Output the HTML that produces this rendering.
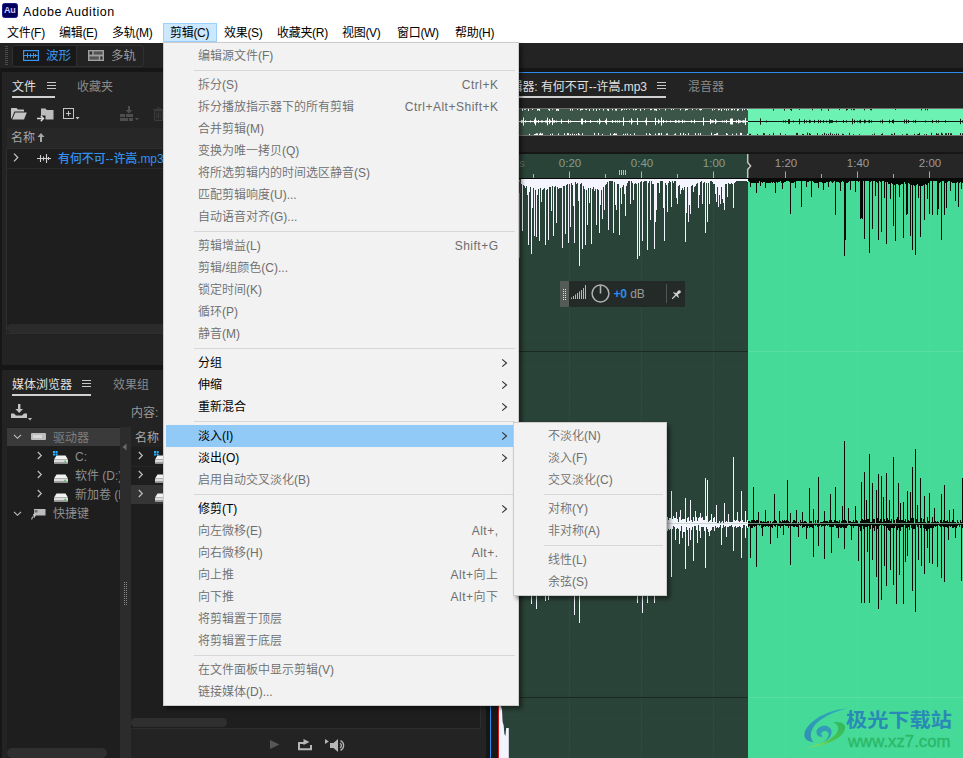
<!DOCTYPE html><html lang="zh"><head><meta charset="utf-8"><title>Adobe Audition</title><style>
*{box-sizing:border-box;margin:0;padding:0}
html,body{width:963px;height:758px;overflow:hidden;background:#1e1e1e}
body{position:relative;font-family:"Liberation Sans","Noto Sans CJK SC",sans-serif;font-size:12px;color:#000;line-height:1}
.a{position:absolute}
.t{position:absolute;white-space:nowrap;line-height:16px;height:16px}
#title{left:0;top:0;width:963px;height:22px;background:#fff}
#menubar{left:0;top:22px;width:963px;height:21px;background:#fff}

.mb{position:absolute;top:25px;letter-spacing:-0.3px;height:16px;line-height:16px;font-size:12px;white-space:nowrap;color:#000}
#toolbar{left:0;top:43px;width:963px;height:25px;background:#232323}
.gap{background:#161616}
.panel{background:#232323}
.dk{background:#1e1e1e}
.tab{position:absolute;margin-top:1px;font-size:12px;line-height:16px;white-space:nowrap}
.menu{position:absolute;background:#f2f2f2;border:1px solid #ccc;box-shadow:3px 3px 4px rgba(0,0,0,.45)}
.mi{position:absolute;left:0;height:22px;line-height:22px;font-size:12px;white-space:nowrap;color:#6d6d6d;font-weight:350}
.mi.en{font-weight:400}
.mi .l{position:absolute;left:34px;top:0}
.mi .r{position:absolute;right:20px;top:0;letter-spacing:.5px;margin-right:-.5px}
.mi.en{color:#000}
.mi.hl{background:#91c9f7}
.sep{position:absolute;height:1px;background:#d7d7d7}
.arr{position:absolute;right:8px;top:6px;width:7px;height:10px}
</style></head><body>
<div id="title" class="a"></div>
<div class="a" style="left:2px;top:3px;width:16px;height:15px;background:#00005b;border-radius:2.5px;border:1px solid #1c1c8a"></div>
<div class="t" style="left:4px;top:3px;font-size:9px;font-weight:bold;color:#c9c9ff;line-height:15px;height:15px;letter-spacing:-0.3px">Au</div>
<div class="t" style="left:23px;top:4px;font-size:12.5px;line-height:16px;letter-spacing:0.55px">Adobe Audition</div>
<div id="menubar" class="a"></div>
<div class="a" style="left:163px;top:23px;width:54px;height:19px;background:#cce8ff;border:1px solid #99d1ff"></div>
<div class="mb" style="left:7px">文件(F)</div>
<div class="mb" style="left:59px">编辑(E)</div>
<div class="mb" style="left:112px">多轨(M)</div>
<div class="mb" style="left:170px">剪辑(C)</div>
<div class="mb" style="left:224px">效果(S)</div>
<div class="mb" style="left:277px">收藏夹(R)</div>
<div class="mb" style="left:342px">视图(V)</div>
<div class="mb" style="left:397px">窗口(W)</div>
<div class="mb" style="left:455px">帮助(H)</div>
<div id="toolbar" class="a"></div>
<div class="a gap" style="left:0;top:68px;width:963px;height:4px"></div>
<div class="a" style="left:5px;top:46px;width:3px;height:19px;background:repeating-linear-gradient(#4a4a4a 0 1px,transparent 1px 2px)"></div>
<div class="a" style="left:12px;top:45px;width:132px;height:22px;border:1px solid #303030;border-radius:3px;background:#232323"></div>
<div class="a" style="left:13px;top:46px;width:63px;height:20px;background:#191919;border-radius:2px 0 0 2px"></div>
<div class="a" style="left:76px;top:46px;width:1px;height:20px;background:#303030"></div>
<svg class="a" style="left:23px;top:50px" width="16" height="11" viewBox="0 0 16 11"><rect x=".6" y=".6" width="14.800" height="9.800" fill="none" stroke="#3b95ea" stroke-width="1.2"/><path d="M1 5.500H15M4.500 3v5M7.500 3.500v4M10.500 3v5M12.500 4v3" stroke="#3b95ea" stroke-width="1" fill="none"/></svg>
<div class="t" style="left:46px;top:48px;color:#3b95ea;font-size:12.5px">波形</div>
<svg class="a" style="left:88px;top:50px" width="16" height="11" viewBox="0 0 17 12" preserveAspectRatio="none"><rect x="0" y="0" width="17" height="12" fill="#a0a0a0"/><rect x="1.5" y="1.5" width="3" height="3.5" fill="#333"/><rect x="6" y="1.5" width="9.5" height="3.5" fill="#555"/><rect x="1.5" y="7" width="10" height="3.5" fill="#555"/><rect x="13" y="7" width="2.5" height="3.5" fill="#333"/></svg>
<div class="t" style="left:111px;top:48px;color:#9a9a9a;font-size:12.5px">多轨</div>
<div class="a panel" style="left:2px;top:72px;width:484px;height:293px"></div>
<div class="a gap" style="left:0;top:72px;width:2px;height:686px"></div>
<div class="tab" style="left:12px;top:78px;color:#e0e0e0">文件</div>
<div class="a" style="left:12px;top:96px;width:43px;height:2px;background:#d0d0d0"></div>
<svg class="a" style="left:47px;top:82px" width="9" height="8"><path d="M0 .5H9M0 3.5H9M0 6.5H9" stroke="#c8c8c8" stroke-width="1"/></svg>
<div class="tab" style="left:77px;top:78px;color:#8a8a8a">收藏夹</div>
<svg class="a" style="left:11px;top:107px" width="16" height="13" viewBox="0 0 16 13"><path d="M0 1.500Q0 1 .5 1H5.500L7 2.500H12.500Q13 2.500 13 3V4.500H3.500L0.600 11.500H0z" fill="#c4c4c4"/><path d="M4.200 5.500H15.800L13 12.500H1.200z" fill="#c4c4c4"/></svg>
<svg class="a" style="left:37px;top:107px" width="17" height="15" viewBox="0 0 17 15"><path d="M4 1.500h4.500L9.800 3H16.500v9.500H8.500V8.500H4z" fill="#bcbcbc"/><path d="M0 11.500h6M3.800 8.800L6.500 11.500 3.800 14.200" stroke="#dcdcdc" stroke-width="1.400" fill="none"/></svg>
<svg class="a" style="left:63px;top:108px" width="18" height="13" viewBox="0 0 18 13"><rect x=".5" y=".5" width="10" height="10" fill="none" stroke="#c4c4c4"/><path d="M3 5.5h5M5.5 3v5" stroke="#c4c4c4"/><path d="M12.5 9h4l-2 2.5z" fill="#c4c4c4"/></svg>
<svg class="a" style="left:120px;top:106px" width="20" height="16" viewBox="0 0 20 16"><path d="M8 0h2v4h2.5L9 7.5 5.5 4H8z" fill="#4e4e4e"/><path d="M0 8h5v3H0zM6 8h7v3H6zM0 12h8v3H0zM9 12h4v3H9z" fill="#4e4e4e"/><path d="M15 12h4l-2 2.5z" fill="#4e4e4e"/></svg>
<svg class="a" style="left:153px;top:107px" width="11" height="14" viewBox="0 0 11 14"><path d="M0 2.500h11M3.500 1h4" stroke="#3c3c3c" stroke-width="1.200"/><rect x="1.500" y="3.600" width="8" height="9.800" rx="1" fill="none" stroke="#3c3c3c" stroke-width="1.200"/><path d="M3.800 5.500v6M5.500 5.500v6M7.200 5.500v6" stroke="#3c3c3c"/></svg>
<div class="a" style="left:7px;top:128px;width:479px;height:20px;background:#272727"></div>
<div class="tab" style="left:11px;top:129px;color:#a8a8a8">名称</div>
<svg class="a" style="left:37px;top:133px" width="8" height="9" viewBox="0 0 8 9"><path d="M4 0L7.5 4H5V9H3V4H.5z" fill="#a8a8a8"/></svg>
<div class="a dk" style="left:6px;top:148px;width:480px;height:186px;border:1px solid #2e2e2e"></div>
<div class="a" style="left:7px;top:168px;width:478px;height:1px;background:#2a2a2a"></div>
<svg class="a" style="left:13px;top:153px" width="6" height="9" viewBox="0 0 6 9"><path d="M1 .7L4.8 4.5 1 8.3" stroke="#c8c8c8" stroke-width="1.2" fill="none"/></svg>
<svg class="a" style="left:37px;top:154px" width="14" height="9" viewBox="0 0 14 9"><path d="M0 4.5H14M3.5 1v7M6.5 2.5v4M9.5 0v9M11.5 3v3" stroke="#d0d0d0" stroke-width="1.1" fill="none"/></svg>
<div class="tab" style="left:58px;top:150px;color:#3390ec;font-weight:500;letter-spacing:-0.1px">有何不可--许嵩.mp3</div>
<div class="a" style="left:7px;top:324px;width:478px;height:9px;background:#2b2b2b;border-radius:5px 0 0 5px"></div>
<div class="a gap" style="left:0;top:365px;width:490px;height:5px"></div>
<div class="a panel" style="left:2px;top:370px;width:484px;height:388px"></div>
<div class="tab" style="left:12px;top:376px;color:#e0e0e0">媒体浏览器</div>
<div class="a" style="left:12px;top:394px;width:79px;height:2px;background:#d0d0d0"></div>
<svg class="a" style="left:82px;top:380px" width="9" height="8"><path d="M0 .5H9M0 3.5H9M0 6.5H9" stroke="#c8c8c8" stroke-width="1"/></svg>
<div class="tab" style="left:113px;top:376px;color:#8a8a8a">效果组</div>
<svg class="a" style="left:11px;top:404px" width="22" height="17" viewBox="0 0 22 17"><path d="M7 0h2.4v5H12L8.2 9 4.4 5H7z" fill="#c4c4c4"/><path d="M0 9.5h3l2 2h6l2-2h3V14H0z" fill="#c4c4c4"/><path d="M17 14h4l-2 2.5z" fill="#c4c4c4"/></svg>
<div class="tab" style="left:131px;top:404px;color:#9a9a9a">内容:</div>
<div class="a dk" style="left:7px;top:427px;width:113px;height:331px"></div>
<div class="a" style="left:7px;top:428px;width:113px;height:18px;background:#3a3a3a"></div>
<div class="a" style="left:120px;top:427px;width:11px;height:331px;background:#2c2c2c"></div>
<svg class="a" style="left:122px;top:443px" width="5" height="8"><path d="M4.5 .5v7L.5 4z" fill="#6a6a6a"/></svg>
<svg class="a" style="left:13px;top:434px" width="9" height="6" viewBox="0 0 9 6"><path d="M1 .8L4.500 4.300 8 .8" stroke="#c0c0c0" stroke-width="1.150" fill="none"/></svg>
<div class="a" style="left:31px;top:433px;width:15px;height:7px;background:#bdbdbd;border-radius:1px"></div><div class="a" style="left:33px;top:435px;width:9px;height:3px;background:#d8d8d8"></div>
<div class="tab" style="left:53px;top:429px;color:#7e7e7e">驱动器</div>
<svg class="a" style="left:37px;top:451px" width="6" height="9" viewBox="0 0 6 9"><path d="M.8 1L4.300 4.500 .8 8" stroke="#c0c0c0" stroke-width="1.150" fill="none"/></svg>
<svg class="a" style="left:53px;top:451px" width="16" height="13" viewBox="0 0 16 13"><path d="M3.500 4.500h9L15 8.500H1z" fill="#f2f2f2"/><rect x="1" y="8.500" width="14" height="4.300" rx=".8" fill="#dcdcdc"/><rect x="1" y="11.300" width="14" height="1.500" rx=".6" fill="#8a8a8a"/><rect x="11.300" y="9.800" width="1.600" height="1.400" fill="#2ecc40"/><path d="M0 0h2v2H0zM2.6 0h2v2h-2zM0 2.6h2v2H0zM2.6 2.6h2v2h-2z" fill="#22b4ff"/></svg>
<div class="tab" style="left:75px;top:448px;color:#8e8e8e">C:</div>
<svg class="a" style="left:37px;top:470px" width="6" height="9" viewBox="0 0 6 9"><path d="M.8 1L4.300 4.500 .8 8" stroke="#c0c0c0" stroke-width="1.150" fill="none"/></svg>
<svg class="a" style="left:53px;top:470px" width="16" height="13" viewBox="0 0 16 13"><path d="M3.500 4.500h9L15 8.500H1z" fill="#f2f2f2"/><rect x="1" y="8.500" width="14" height="4.300" rx=".8" fill="#dcdcdc"/><rect x="1" y="11.300" width="14" height="1.500" rx=".6" fill="#8a8a8a"/><rect x="11.300" y="9.800" width="1.600" height="1.400" fill="#2ecc40"/></svg>
<div class="tab" style="left:75px;top:467px;color:#8e8e8e">软件 (D:)</div>
<svg class="a" style="left:37px;top:489px" width="6" height="9" viewBox="0 0 6 9"><path d="M.8 1L4.300 4.500 .8 8" stroke="#c0c0c0" stroke-width="1.150" fill="none"/></svg>
<svg class="a" style="left:53px;top:489px" width="16" height="13" viewBox="0 0 16 13"><path d="M3.500 4.500h9L15 8.500H1z" fill="#f2f2f2"/><rect x="1" y="8.500" width="14" height="4.300" rx=".8" fill="#dcdcdc"/><rect x="1" y="11.300" width="14" height="1.500" rx=".6" fill="#8a8a8a"/><rect x="11.300" y="9.800" width="1.600" height="1.400" fill="#2ecc40"/></svg>
<div class="tab" style="left:75px;top:486px;color:#8e8e8e">新加卷 (E:)</div>
<div class="a" style="left:120px;top:427px;width:11px;height:331px;background:#2c2c2c"></div>
<svg class="a" style="left:122px;top:443px" width="5" height="8"><path d="M4.5 .5v7L.5 4z" fill="#6a6a6a"/></svg>
<div class="a" style="left:124px;top:582px;width:3px;height:24px;background:repeating-linear-gradient(90deg,#8a8a8a 0 1px,transparent 1px 2px)"></div><div class="a" style="left:124px;top:583px;width:3px;height:24px;background:repeating-linear-gradient(#2c2c2c 0 1px,transparent 1px 2px)"></div>
<svg class="a" style="left:13px;top:511px" width="9" height="6" viewBox="0 0 9 6"><path d="M1 .8L4.500 4.300 8 .8" stroke="#c0c0c0" stroke-width="1.150" fill="none"/></svg>
<svg class="a" style="left:31px;top:508px" width="15" height="12" viewBox="0 0 15 12"><path d="M3 1h11.500v6.500H3z" fill="#bcbcbc"/><path d="M3.500 2h3v2.500h-3z" fill="#2a2a2a" opacity=".5"/><path d="M.8 11.500C1 9 2 7.800 4 7.500M2 6.500L4.200 7.500 3 9.800" stroke="#dcdcdc" stroke-width="1" fill="none"/></svg>
<div class="tab" style="left:53px;top:505px;color:#8e8e8e">快捷键</div>
<div class="a" style="left:7px;top:748px;width:100px;height:10px;background:#2f2f2f;border-radius:5px"></div>
<div class="a dk" style="left:131px;top:427px;width:350px;height:302px;border-right:1px solid #2d2d2d;border-bottom:1px solid #2d2d2d"></div>
<div class="a panel" style="left:131px;top:427px;width:349px;height:20px"></div>
<div class="tab" style="left:135px;top:429px;color:#a8a8a8">名称</div>
<div class="a" style="left:131px;top:466px;width:349px;height:1px;background:#262626"></div>
<div class="a" style="left:131px;top:485px;width:349px;height:19px;background:#353535"></div>
<svg class="a" style="left:138px;top:451px" width="6" height="9" viewBox="0 0 6 9"><path d="M.8 1L4.300 4.500 .8 8" stroke="#c0c0c0" stroke-width="1.150" fill="none"/></svg>
<svg class="a" style="left:154px;top:451px" width="16" height="13" viewBox="0 0 16 13"><path d="M3.500 4.500h9L15 8.500H1z" fill="#f2f2f2"/><rect x="1" y="8.500" width="14" height="4.300" rx=".8" fill="#dcdcdc"/><rect x="1" y="11.300" width="14" height="1.500" rx=".6" fill="#8a8a8a"/><rect x="11.300" y="9.800" width="1.600" height="1.400" fill="#2ecc40"/><path d="M0 0h2v2H0zM2.6 0h2v2h-2zM0 2.6h2v2H0zM2.6 2.6h2v2h-2z" fill="#22b4ff"/></svg>
<svg class="a" style="left:138px;top:470px" width="6" height="9" viewBox="0 0 6 9"><path d="M.8 1L4.300 4.500 .8 8" stroke="#c0c0c0" stroke-width="1.150" fill="none"/></svg>
<svg class="a" style="left:154px;top:470px" width="16" height="13" viewBox="0 0 16 13"><path d="M3.500 4.500h9L15 8.500H1z" fill="#f2f2f2"/><rect x="1" y="8.500" width="14" height="4.300" rx=".8" fill="#dcdcdc"/><rect x="1" y="11.300" width="14" height="1.500" rx=".6" fill="#8a8a8a"/><rect x="11.300" y="9.800" width="1.600" height="1.400" fill="#2ecc40"/></svg>
<svg class="a" style="left:138px;top:489px" width="6" height="9" viewBox="0 0 6 9"><path d="M.8 1L4.300 4.500 .8 8" stroke="#c0c0c0" stroke-width="1.150" fill="none"/></svg>
<svg class="a" style="left:154px;top:489px" width="16" height="13" viewBox="0 0 16 13"><path d="M3.500 4.500h9L15 8.500H1z" fill="#f2f2f2"/><rect x="1" y="8.500" width="14" height="4.300" rx=".8" fill="#dcdcdc"/><rect x="1" y="11.300" width="14" height="1.500" rx=".6" fill="#8a8a8a"/><rect x="11.300" y="9.800" width="1.600" height="1.400" fill="#2ecc40"/></svg>
<div class="a" style="left:131px;top:718px;width:96px;height:9px;background:#2f2f2f;border-radius:5px"></div>
<svg class="a" style="left:270px;top:740px" width="10" height="9"><path d="M0 0L9.500 4.500 0 9z" fill="#575757"/></svg>
<svg class="a" style="left:298px;top:738px" width="15" height="13" viewBox="0 0 15 13"><path d="M4.500 5H1V11.200H13V7" stroke="#b6b6b6" stroke-width="2" fill="none"/><path d="M3 4h3.500v2H3z" fill="#b6b6b6"/><path d="M5.500 1L11.500 4 5.500 7z" fill="#b6b6b6"/></svg>
<svg class="a" style="left:325px;top:738px" width="22" height="15" viewBox="0 0 22 15"><path d="M0 1L3.800 3.500 0 6z" fill="#b6b6b6"/><path d="M5 5h3.500L13 1v13L8.500 10H5z" fill="#b6b6b6"/><path d="M15 5.200a2.600 2.600 0 010 4.600M15.500 2.600a5.400 5.400 0 010 9.800" stroke="#b6b6b6" stroke-width="1.300" fill="none"/></svg>
<div class="a gap" style="left:486px;top:72px;width:4px;height:686px"></div>
<div class="a panel" style="left:490px;top:72px;width:473px;height:686px"></div>
<div class="a" style="left:490px;top:72px;width:473px;height:1px;background:#2d8ceb"></div>
<div class="a" style="left:490px;top:72px;width:1px;height:686px;background:#2d8ceb"></div>
<div class="a" style="left:491px;top:107px;width:7px;height:651px;background:#191919"></div>
<div class="a" style="left:498px;top:154px;width:1px;height:604px;background:#d01818"></div>
<div class="tab" style="right:316px;top:78px;color:#e0e0e0;letter-spacing:-0.05px">编辑器: 有何不可--许嵩.mp3</div>
<div class="a" style="left:500px;top:96px;width:166px;height:2px;background:#d0d0d0"></div>
<svg class="a" style="left:657px;top:82px" width="9" height="8"><path d="M0 .5H9M0 3.5H9M0 6.5H9" stroke="#c8c8c8" stroke-width="1"/></svg>
<div class="tab" style="left:688px;top:78px;color:#8a8a8a">混音器</div>
<div class="a" style="left:499px;top:108px;width:464px;height:28px;background:#707070"></div>
<div class="a" style="left:499px;top:109px;width:249px;height:26px;background:#3b5549"></div>
<div class="a" style="left:748px;top:109px;width:215px;height:26px;background:#6cf3b3"></div>
<svg class="a" style="left:0;top:0" width="963" height="140" viewBox="0 0 963 140"><path d="M521.5 119.9V123.1M522.5 120.3V122.7M522.5 109V110.8M523.5 117.4V125.6M524.5 109V109.7M525.5 120.4V122.6M525.5 109V109.7M528.5 109V111.0M529.5 135V133.9M530.5 120.5V122.5M532.5 109V110.0M534.5 119.5V123.5M534.5 135V134.2M535.5 117.6V125.4M535.5 135V133.9M536.5 120.5V122.5M536.5 135V133.4M537.5 109V110.7M537.5 135V133.3M538.5 120.1V122.9M538.5 109V110.1M539.5 109V110.9M539.5 135V133.7M540.5 135V132.7M541.5 120.4V122.6M541.5 135V133.8M542.5 120.5V122.5M542.5 135V133.3M545.5 120.5V122.5M546.5 120.4V122.6M547.5 117.7V125.3M548.5 109V109.8M549.5 119.2V123.8M549.5 109V110.8M550.5 120.5V122.5M550.5 135V133.9M552.5 117.9V125.1M552.5 109V109.7M552.5 135V133.6M553.5 120.5V122.5M554.5 120.2V122.8M556.5 120.5V122.5M556.5 109V110.9M557.5 109V110.5M558.5 109V111.0M558.5 135V133.4M561.5 119.3V123.7M564.5 135V133.3M567.5 135V133.1M568.5 119.6V123.4M568.5 135V133.2M570.5 120.5V122.5M570.5 109V110.6M570.5 135V134.0M572.5 109V110.6M572.5 135V133.6M574.5 135V134.1M576.5 135V134.0M577.5 109V110.0M578.5 135V133.0M579.5 135V134.2M580.5 109V110.6M581.5 118.7V124.3M581.5 109V109.9M582.5 118.5V124.5M582.5 109V109.9M582.5 135V133.3M585.5 120.0V123.0M585.5 109V109.7M586.5 109V110.1M589.5 109V110.9M590.5 120.1V122.9M593.5 109V110.6M594.5 135V132.9M596.5 109V110.9M597.5 120.5V122.5M598.5 135V133.0M599.5 118.7V124.3M599.5 109V110.1M600.5 120.5V122.5M602.5 135V133.9M603.5 109V110.6M605.5 120.2V122.8M606.5 118.4V124.6M607.5 109V110.4M608.5 109V111.0M610.5 135V133.4M612.5 120.0V123.0M612.5 109V110.3M613.5 135V134.0M614.5 135V133.1M615.5 120.4V122.6M615.5 109V110.6M615.5 135V133.7M616.5 109V110.7M616.5 135V133.5M617.5 120.4V122.6M619.5 120.4V122.6M621.5 109V110.7M622.5 109V110.1M623.5 117.3V125.7M623.5 135V133.9M624.5 109V109.8M625.5 135V133.7M626.5 109V110.0M627.5 135V133.5M629.5 120.5V122.5M629.5 109V109.7M630.5 135V134.0M631.5 118.4V124.6M632.5 120.5V122.5M633.5 109V110.3M634.5 135V133.2M635.5 109V110.3M636.5 109V109.9M637.5 118.1V124.9M640.5 109V110.9M644.5 109V110.1M645.5 120.3V122.7M646.5 117.7V125.3M646.5 135V133.2M649.5 135V133.3M650.5 109V110.2M650.5 135V134.0M651.5 109V110.0M654.5 109V110.5M655.5 117.8V125.2M655.5 109V110.3M655.5 135V133.5M656.5 109V110.9M658.5 119.4V123.6M658.5 135V133.2M659.5 120.5V122.5M659.5 109V109.8M659.5 135V133.1M661.5 117.4V125.6M661.5 135V132.9M663.5 119.9V123.1M665.5 109V110.5M666.5 120.5V122.5M666.5 135V133.6M667.5 135V133.4M670.5 120.5V122.5M671.5 109V110.1M673.5 109V110.0M674.5 135V134.2M675.5 120.1V122.9M675.5 135V133.4M676.5 120.5V122.5M678.5 120.3V122.7M679.5 120.5V122.5M680.5 109V110.3M680.5 135V133.0M682.5 119.8V123.2M683.5 135V132.9M684.5 120.5V122.5M685.5 109V110.7M685.5 135V134.0M686.5 109V110.1M687.5 109V109.9M688.5 135V133.2M691.5 120.3V122.7M692.5 109V110.2M694.5 119.7V123.3M695.5 135V133.1M696.5 109V109.7M698.5 135V133.4M699.5 109V109.8M700.5 109V110.5M700.5 135V133.1M701.5 109V110.0M703.5 117.5V125.5M710.5 119.0V124.0M711.5 120.4V122.6M711.5 135V132.7M712.5 120.3V122.7M712.5 109V110.5M713.5 120.5V122.5M714.5 109V109.8M714.5 135V134.0M715.5 119.1V123.9M715.5 135V134.0M716.5 120.5V122.5M716.5 135V133.4M717.5 135V132.9M718.5 109V110.4M719.5 109V109.8M721.5 109V111.0M722.5 120.5V122.5M724.5 120.5V122.5M724.5 109V110.0M726.5 119.8V123.2M726.5 109V110.7M726.5 135V133.0M727.5 135V133.9M728.5 109V110.3M730.5 118.7V124.3M731.5 118.5V124.5M731.5 109V110.4M732.5 118.5V124.5M732.5 109V110.1M732.5 135V133.8M734.5 109V110.2M736.5 120.2V122.8M736.5 135V133.4M737.5 109V111.0M738.5 119.5V123.5M738.5 109V110.2M739.5 120.3V122.7M740.5 120.4V122.6M740.5 135V132.8M741.5 135V133.0M742.5 120.5V122.5M742.5 109V110.6M743.5 120.2V122.8M744.5 120.4V122.6M744.5 109V109.9M745.5 117.9V125.1M747.5 109V110.2M747.5 135V133.7" stroke="#fff" stroke-width="1" fill="none"/><path d="M519 121.5H748" stroke="#fff" stroke-width="1.2"/><path d="M749.5 135V133.8M750.5 135V133.7M757.5 135V133.9M760.5 118.3V124.7M763.5 135V133.0M764.5 135V133.4M766.5 120.5V122.5M769.5 135V134.0M773.5 109V110.6M773.5 135V132.8M780.5 135V133.1M783.5 120.5V122.5M784.5 109V110.6M785.5 120.4V122.6M785.5 135V134.2M788.5 119.3V123.7M789.5 119.2V123.8M790.5 109V110.0M791.5 109V110.9M793.5 120.5V122.5M796.5 135V133.0M797.5 135V132.9M799.5 118.8V124.2M799.5 109V109.8M802.5 135V133.9M803.5 135V134.0M804.5 119.6V123.4M806.5 120.4V122.6M807.5 135V132.7M809.5 119.8V123.2M809.5 135V133.0M810.5 120.4V122.6M810.5 135V133.9M812.5 109V110.3M814.5 119.9V123.1M817.5 135V133.1M818.5 119.8V123.2M820.5 120.1V122.9M821.5 109V110.5M822.5 135V134.1M823.5 120.1V122.9M824.5 135V132.8M826.5 120.5V122.5M826.5 135V133.8M828.5 109V110.8M828.5 135V133.9M829.5 119.5V123.5M830.5 120.2V122.8M830.5 135V132.7M831.5 120.1V122.9M832.5 120.2V122.8M832.5 135V133.9M834.5 135V134.2M836.5 120.4V122.6M836.5 135V133.6M838.5 135V133.7M839.5 109V110.1M842.5 135V133.7M843.5 120.0V123.0M843.5 135V134.0M846.5 120.3V122.7M846.5 109V110.6M847.5 109V109.9M849.5 135V132.8M851.5 109V110.1M852.5 118.7V124.3M853.5 109V110.2M853.5 135V134.2M854.5 119.8V123.2M854.5 109V110.1M857.5 120.5V122.5M859.5 120.4V122.6M859.5 135V134.2M860.5 119.7V123.3M864.5 119.7V123.3M864.5 109V110.3M865.5 120.3V122.7M868.5 120.5V122.5M869.5 119.9V123.1M870.5 109V110.2M871.5 120.3V122.7M871.5 109V110.3M872.5 135V134.3M874.5 135V133.5M880.5 120.5V122.5M881.5 135V134.0M882.5 119.6V123.4M882.5 135V133.4M889.5 119.8V123.2M891.5 135V133.8M892.5 120.0V123.0M892.5 135V134.2M893.5 119.5V123.5M894.5 135V132.9M895.5 109V110.0M902.5 135V134.3M904.5 119.6V123.4M906.5 119.5V123.5M906.5 135V133.8M907.5 135V133.8M908.5 120.0V123.0M913.5 120.5V122.5M914.5 135V133.8M915.5 119.9V123.1M917.5 135V134.2M918.5 135V134.0M919.5 135V132.9M921.5 109V110.4M924.5 135V134.3M925.5 120.5V122.5M925.5 109V110.2M926.5 135V134.0M927.5 109V110.4M931.5 135V132.8M932.5 119.9V123.1M936.5 120.3V122.7M936.5 135V133.1M937.5 135V134.1M938.5 120.3V122.7M938.5 135V133.5M941.5 135V132.7M942.5 135V133.6M945.5 120.3V122.7M945.5 135V133.3M946.5 135V133.3M948.5 135V133.0M950.5 135V133.3M951.5 135V133.3M960.5 118.8V124.2M960.5 135V133.0M962.5 120.4V122.6M962.5 135V133.4" stroke="#0c1a12" stroke-width="1" fill="none"/><path d="M748 121.5H963" stroke="#0c1a12" stroke-width="1"/></svg>
<div class="a" style="left:499px;top:152px;width:464px;height:2px;background:#161616"></div>
<div class="a" style="left:499px;top:154px;width:249px;height:24px;background:#2a4338"></div>
<div class="a" style="left:748px;top:154px;width:215px;height:24px;background:#262626"></div>
<div class="t" style="left:550.0px;top:155px;width:40px;text-align:center;color:#869c90;font-size:11.5px">0:20</div>
<div class="t" style="left:622.0px;top:155px;width:40px;text-align:center;color:#869c90;font-size:11.5px">0:40</div>
<div class="t" style="left:694.0px;top:155px;width:40px;text-align:center;color:#869c90;font-size:11.5px">1:00</div>
<div class="t" style="left:766.0px;top:155px;width:40px;text-align:center;color:#9a9a9a;font-size:11.5px">1:20</div>
<div class="t" style="left:838.0px;top:155px;width:40px;text-align:center;color:#9a9a9a;font-size:11.5px">1:40</div>
<div class="t" style="left:910.0px;top:155px;width:40px;text-align:center;color:#9a9a9a;font-size:11.5px">2:00</div>
<div class="t" style="left:503px;top:155px;color:#5f7a6c;font-size:11.5px">hms</div>
<svg class="a" style="left:0;top:150px" width="963" height="30" viewBox="0 150 963 30"><path d="M533.5 174V178M569.5 171.5V178M605.5 174V178M641.5 171.5V178M677.5 174V178M713.5 171.5V178" stroke="#a9bbb1" stroke-width="1"/><path d="M785.5 171.5V178M821.5 174V178M857.5 171.5V178M893.5 174V178M929.5 171.5V178" stroke="#a8a8a8" stroke-width="1"/><path d="M619.5 170v5M621.5 170v5M623.5 170v5M625.5 170v5" stroke="#b4c4ba" stroke-width="1"/><path d="M747.7 154V162.5L750.6 166 747.7 169.5V178.5" stroke="#c4c4c4" stroke-width="1.5" fill="none"/></svg>
<div class="a" style="left:499px;top:178px;width:249px;height:580px;background:#2a4338"></div>
<div class="a" style="left:748px;top:178px;width:215px;height:580px;background:#45da97"></div>
<div class="a" style="left:569px;top:178px;width:1px;height:580px;background:#2f493d"></div><div class="a" style="left:641px;top:178px;width:1px;height:580px;background:#2f493d"></div><div class="a" style="left:713px;top:178px;width:1px;height:580px;background:#2f493d"></div><div class="a" style="left:785px;top:178px;width:1px;height:580px;background:#4adc9a"></div><div class="a" style="left:857px;top:178px;width:1px;height:580px;background:#4adc9a"></div><div class="a" style="left:929px;top:178px;width:1px;height:580px;background:#4adc9a"></div><div class="a" style="left:499px;top:183px;width:249px;height:1px;background:#2c453a"></div><div class="a" style="left:748px;top:183px;width:215px;height:1px;background:#48db98"></div><div class="a" style="left:499px;top:198px;width:249px;height:1px;background:#2c453a"></div><div class="a" style="left:748px;top:198px;width:215px;height:1px;background:#48db98"></div><div class="a" style="left:499px;top:214px;width:249px;height:1px;background:#2c453a"></div><div class="a" style="left:748px;top:214px;width:215px;height:1px;background:#48db98"></div><div class="a" style="left:499px;top:229px;width:249px;height:1px;background:#2c453a"></div><div class="a" style="left:748px;top:229px;width:215px;height:1px;background:#48db98"></div><div class="a" style="left:499px;top:244px;width:249px;height:1px;background:#2c453a"></div><div class="a" style="left:748px;top:244px;width:215px;height:1px;background:#48db98"></div><div class="a" style="left:499px;top:260px;width:249px;height:1px;background:#2c453a"></div><div class="a" style="left:748px;top:260px;width:215px;height:1px;background:#48db98"></div><div class="a" style="left:499px;top:275px;width:249px;height:1px;background:#2c453a"></div><div class="a" style="left:748px;top:275px;width:215px;height:1px;background:#48db98"></div><div class="a" style="left:499px;top:290px;width:249px;height:1px;background:#2c453a"></div><div class="a" style="left:748px;top:290px;width:215px;height:1px;background:#48db98"></div><div class="a" style="left:499px;top:306px;width:249px;height:1px;background:#2c453a"></div><div class="a" style="left:748px;top:306px;width:215px;height:1px;background:#48db98"></div><div class="a" style="left:499px;top:321px;width:249px;height:1px;background:#2c453a"></div><div class="a" style="left:748px;top:321px;width:215px;height:1px;background:#48db98"></div><div class="a" style="left:499px;top:336px;width:249px;height:1px;background:#2c453a"></div><div class="a" style="left:748px;top:336px;width:215px;height:1px;background:#48db98"></div><div class="a" style="left:499px;top:367px;width:249px;height:1px;background:#2c453a"></div><div class="a" style="left:748px;top:367px;width:215px;height:1px;background:#48db98"></div><div class="a" style="left:499px;top:382px;width:249px;height:1px;background:#2c453a"></div><div class="a" style="left:748px;top:382px;width:215px;height:1px;background:#48db98"></div><div class="a" style="left:499px;top:397px;width:249px;height:1px;background:#2c453a"></div><div class="a" style="left:748px;top:397px;width:215px;height:1px;background:#48db98"></div><div class="a" style="left:499px;top:413px;width:249px;height:1px;background:#2c453a"></div><div class="a" style="left:748px;top:413px;width:215px;height:1px;background:#48db98"></div><div class="a" style="left:499px;top:428px;width:249px;height:1px;background:#2c453a"></div><div class="a" style="left:748px;top:428px;width:215px;height:1px;background:#48db98"></div><div class="a" style="left:499px;top:443px;width:249px;height:1px;background:#2c453a"></div><div class="a" style="left:748px;top:443px;width:215px;height:1px;background:#48db98"></div><div class="a" style="left:499px;top:459px;width:249px;height:1px;background:#2c453a"></div><div class="a" style="left:748px;top:459px;width:215px;height:1px;background:#48db98"></div><div class="a" style="left:499px;top:474px;width:249px;height:1px;background:#2c453a"></div><div class="a" style="left:748px;top:474px;width:215px;height:1px;background:#48db98"></div><div class="a" style="left:499px;top:489px;width:249px;height:1px;background:#2c453a"></div><div class="a" style="left:748px;top:489px;width:215px;height:1px;background:#48db98"></div><div class="a" style="left:499px;top:504px;width:249px;height:1px;background:#2c453a"></div><div class="a" style="left:748px;top:504px;width:215px;height:1px;background:#48db98"></div><div class="a" style="left:499px;top:520px;width:249px;height:1px;background:#2c453a"></div><div class="a" style="left:748px;top:520px;width:215px;height:1px;background:#48db98"></div><div class="a" style="left:499px;top:535px;width:249px;height:1px;background:#2c453a"></div><div class="a" style="left:748px;top:535px;width:215px;height:1px;background:#48db98"></div><div class="a" style="left:499px;top:550px;width:249px;height:1px;background:#2c453a"></div><div class="a" style="left:748px;top:550px;width:215px;height:1px;background:#48db98"></div><div class="a" style="left:499px;top:566px;width:249px;height:1px;background:#2c453a"></div><div class="a" style="left:748px;top:566px;width:215px;height:1px;background:#48db98"></div><div class="a" style="left:499px;top:581px;width:249px;height:1px;background:#2c453a"></div><div class="a" style="left:748px;top:581px;width:215px;height:1px;background:#48db98"></div><div class="a" style="left:499px;top:596px;width:249px;height:1px;background:#2c453a"></div><div class="a" style="left:748px;top:596px;width:215px;height:1px;background:#48db98"></div><div class="a" style="left:499px;top:612px;width:249px;height:1px;background:#2c453a"></div><div class="a" style="left:748px;top:612px;width:215px;height:1px;background:#48db98"></div><div class="a" style="left:499px;top:627px;width:249px;height:1px;background:#2c453a"></div><div class="a" style="left:748px;top:627px;width:215px;height:1px;background:#48db98"></div><div class="a" style="left:499px;top:642px;width:249px;height:1px;background:#2c453a"></div><div class="a" style="left:748px;top:642px;width:215px;height:1px;background:#48db98"></div><div class="a" style="left:499px;top:658px;width:249px;height:1px;background:#2c453a"></div><div class="a" style="left:748px;top:658px;width:215px;height:1px;background:#48db98"></div><div class="a" style="left:499px;top:673px;width:249px;height:1px;background:#2c453a"></div><div class="a" style="left:748px;top:673px;width:215px;height:1px;background:#48db98"></div><div class="a" style="left:499px;top:688px;width:249px;height:1px;background:#2c453a"></div><div class="a" style="left:748px;top:688px;width:215px;height:1px;background:#48db98"></div><div class="a" style="left:499px;top:703px;width:249px;height:1px;background:#2c453a"></div><div class="a" style="left:748px;top:703px;width:215px;height:1px;background:#48db98"></div><div class="a" style="left:499px;top:719px;width:249px;height:1px;background:#2c453a"></div><div class="a" style="left:748px;top:719px;width:215px;height:1px;background:#48db98"></div><div class="a" style="left:499px;top:734px;width:249px;height:1px;background:#2c453a"></div><div class="a" style="left:748px;top:734px;width:215px;height:1px;background:#48db98"></div><div class="a" style="left:499px;top:749px;width:249px;height:1px;background:#2c453a"></div><div class="a" style="left:748px;top:749px;width:215px;height:1px;background:#48db98"></div><div class="a" style="left:499px;top:351px;width:249px;height:1px;background:#1a2a22"></div><div class="a" style="left:748px;top:351px;width:215px;height:1px;background:#5ade9f"></div><div class="a" style="left:499px;top:697px;width:249px;height:1px;background:#1a2a22"></div><div class="a" style="left:748px;top:697px;width:215px;height:1px;background:#5ade9f"></div>
<div class="a" style="left:499px;top:178px;width:464px;height:1px;background:#0a0a0a"></div>
<svg class="a" style="left:0;top:0" width="963" height="758" viewBox="0 0 963 758"><path d="M521.5 179v5M522.5 179v52M523.5 179v6M524.5 179v7M525.5 179v9M526.5 179v7M527.5 179v16M528.5 179v66M529.5 179v13M530.5 179v8M531.5 179v75M532.5 179v29M533.5 179v9M534.5 179v57M535.5 179v11M536.5 179v58M537.5 179v16M538.5 179v10M539.5 179v62M540.5 179v9M541.5 179v23M542.5 179v11M543.5 179v10M544.5 179v9M545.5 179v66M546.5 179v11M547.5 179v10M548.5 179v61M549.5 179v8M550.5 179v8M551.5 179v32M552.5 179v7M553.5 179v57M554.5 179v8M555.5 179v7M556.5 179v44M557.5 179v8M558.5 179v10M559.5 179v9M560.5 179v9M561.5 179v9M562.5 179v69M563.5 179v7M564.5 179v7M565.5 179v55M566.5 179v6M567.5 179v5M568.5 179v64M569.5 179v5M570.5 179v48M571.5 179v4M572.5 179v6M573.5 179v27M574.5 179v64M575.5 179v3M576.5 179v5M577.5 179v4M578.5 179v22M579.5 179v87M580.5 179v5M581.5 179v4M582.5 179v70M583.5 179v7M584.5 179v10M585.5 179v66M586.5 179v11M587.5 179v46M588.5 179v9M589.5 179v24M590.5 179v9M591.5 179v65M592.5 179v10M593.5 179v8M594.5 179v12M595.5 179v10M596.5 179v46M597.5 179v10M598.5 179v11M599.5 179v54M600.5 179v26M601.5 179v11M602.5 179v40M603.5 179v8M604.5 179v31M605.5 179v6M606.5 179v5M607.5 179v3M608.5 179v51M609.5 179v2M610.5 179v2M611.5 179v2M612.5 179v2M613.5 179v54M614.5 179v3M615.5 179v26M616.5 179v31M617.5 179v5M618.5 179v5M619.5 179v56M620.5 179v9M621.5 179v25M622.5 179v8M623.5 179v6M624.5 179v15M625.5 179v37M626.5 179v7M627.5 179v4M628.5 179v2M629.5 179v2M630.5 179v25M631.5 179v2M632.5 179v4M633.5 179v21M634.5 179v5M635.5 179v4M636.5 179v5M637.5 179v80M638.5 179v4M639.5 179v77M640.5 179v3M641.5 179v2M642.5 179v62M643.5 179v3M644.5 179v2M645.5 179v2M646.5 179v2M647.5 179v71M648.5 179v4M649.5 179v2M650.5 179v41M651.5 179v2M652.5 179v5M653.5 179v5M654.5 179v70M655.5 179v43M656.5 179v31M657.5 179v4M658.5 179v4M659.5 179v14M660.5 179v2M661.5 179v2M662.5 179v2M663.5 179v29M664.5 179v62M665.5 179v4M666.5 179v6M667.5 179v33M668.5 179v4M669.5 179v2M670.5 179v3M671.5 179v28M672.5 179v2M673.5 179v4M674.5 179v2M675.5 179v2M676.5 179v19M677.5 179v25M678.5 179v7M679.5 179v6M680.5 179v15M681.5 179v11M682.5 179v9M683.5 179v11M684.5 179v8M685.5 179v63M686.5 179v34M687.5 179v8M688.5 179v43M689.5 179v26M690.5 179v35M691.5 179v7M692.5 179v6M693.5 179v13M694.5 179v8M695.5 179v7M696.5 179v5M697.5 179v4M698.5 179v29M699.5 179v16M700.5 179v3M701.5 179v2M702.5 179v25M703.5 179v4M704.5 179v3M705.5 179v54M706.5 179v4M707.5 179v43M708.5 179v4M709.5 179v25M710.5 179v2M711.5 179v2M712.5 179v3M713.5 179v5M714.5 179v5M715.5 179v15M716.5 179v23M717.5 179v8M718.5 179v28M719.5 179v16M720.5 179v25M721.5 179v8M722.5 179v20M723.5 179v24M724.5 179v31M725.5 179v5M726.5 179v5M727.5 179v18M728.5 179v4M729.5 179v5M730.5 179v5M731.5 179v4M732.5 179v5M733.5 179v29M734.5 179v4M735.5 179v3M736.5 179v2M737.5 179v2M738.5 179v2M739.5 179v2M740.5 179v2M741.5 179v2M742.5 179v2M743.5 179v2M744.5 179v2M745.5 179v2M746.5 179v2M747.5 179v3" stroke="#f4f4ff" stroke-width="1" fill="none"/><path d="M748.5 179v2M749.5 179v3M750.5 179v8M751.5 179v4M752.5 179v4M753.5 179v4M754.5 179v4M755.5 179v4M756.5 179v14M757.5 179v4M758.5 179v4M759.5 179v2M760.5 179v7M761.5 179v3M762.5 179v4M763.5 179v3M764.5 179v3M765.5 179v9M766.5 179v4M767.5 179v4M768.5 179v4M769.5 179v4M770.5 179v4M771.5 179v3M772.5 179v4M773.5 179v3M774.5 179v4M775.5 179v14M776.5 179v3M777.5 179v4M778.5 179v3M779.5 179v3M780.5 179v2M781.5 179v4M782.5 179v10M783.5 179v4M784.5 179v3M785.5 179v3M786.5 179v2M787.5 179v2M788.5 179v2M789.5 179v3M790.5 179v35M791.5 179v4M792.5 179v4M793.5 179v4M794.5 179v3M795.5 179v9M796.5 179v2M797.5 179v2M798.5 179v2M799.5 179v2M800.5 179v2M801.5 179v28M802.5 179v2M803.5 179v2M804.5 179v2M805.5 179v2M806.5 179v8M807.5 179v3M808.5 179v3M809.5 179v2M810.5 179v2M811.5 179v18M812.5 179v2M813.5 179v3M814.5 179v4M815.5 179v4M816.5 179v4M817.5 179v4M818.5 179v9M819.5 179v3M820.5 179v3M821.5 179v3M822.5 179v4M823.5 179v11M824.5 179v4M825.5 179v4M826.5 179v3M827.5 179v3M828.5 179v8M829.5 179v3M830.5 179v2M831.5 179v3M832.5 179v4M833.5 179v3M834.5 179v2M835.5 179v36M836.5 179v3M837.5 179v3M838.5 179v3M839.5 179v4M840.5 179v12M841.5 179v3M842.5 179v2M843.5 179v3M844.5 179v77M845.5 179v61M846.5 179v4M847.5 179v4M848.5 179v3M849.5 179v2M850.5 179v11M851.5 179v2M852.5 179v2M853.5 179v2M854.5 179v2M855.5 179v13M856.5 179v2M857.5 179v2M858.5 179v3M859.5 179v2M860.5 179v40M861.5 179v39M862.5 179v40M863.5 179v2M864.5 179v60M865.5 179v2M866.5 179v2M867.5 179v2M868.5 179v2M869.5 179v74M870.5 179v3M871.5 179v2M872.5 179v50M873.5 179v2M874.5 179v2M875.5 179v17M876.5 179v3M877.5 179v4M878.5 179v61M879.5 179v2M880.5 179v3M881.5 179v53M882.5 179v2M883.5 179v2M884.5 179v19M885.5 179v3M886.5 179v65M887.5 179v3M888.5 179v5M889.5 179v5M890.5 179v20M891.5 179v4M892.5 179v5M893.5 179v47M894.5 179v6M895.5 179v62M896.5 179v5M897.5 179v5M898.5 179v6M899.5 179v18M900.5 179v6M901.5 179v5M902.5 179v5M903.5 179v59M904.5 179v3M905.5 179v5M906.5 179v36M907.5 179v35M908.5 179v4M909.5 179v5M910.5 179v57M911.5 179v6M912.5 179v71M913.5 179v6M914.5 179v7M915.5 179v76M916.5 179v6M917.5 179v5M918.5 179v19M919.5 179v7M920.5 179v58M921.5 179v7M922.5 179v7M923.5 179v6M924.5 179v41M925.5 179v5M926.5 179v6M927.5 179v20M928.5 179v4M929.5 179v35M930.5 179v2M931.5 179v2M932.5 179v36M933.5 179v2M934.5 179v2M935.5 179v2M936.5 179v2M937.5 179v36M938.5 179v30M939.5 179v4M940.5 179v3M941.5 179v61M942.5 179v2M943.5 179v2M944.5 179v36M945.5 179v4M946.5 179v29M947.5 179v3M948.5 179v2M949.5 179v2M950.5 179v12M951.5 179v3M952.5 179v4M953.5 179v4M954.5 179v4M955.5 179v22M956.5 179v4M957.5 179v3M958.5 179v28M959.5 179v4M960.5 179v3M961.5 179v10M962.5 179v4" stroke="#050a07" stroke-width="1" fill="none"/><path d="M521.5 523V526M522.5 522V530M523.5 522V525M524.5 521V531M525.5 520V530M526.5 520V526M527.5 523V527M528.5 523V527M529.5 519V528M530.5 520V529M531.5 521V604M532.5 517V529M533.5 520V529M534.5 520V527M535.5 517V527M536.5 516V609M537.5 517V526M538.5 519V532M539.5 521V526M540.5 518V527M541.5 519V526M542.5 516V527M543.5 522V530M544.5 521V529M545.5 520V601M546.5 519V528M547.5 523V528M548.5 521V600M549.5 519V528M550.5 522V528M551.5 520V529M552.5 516V527M553.5 520V526M554.5 517V527M555.5 517V531M556.5 521V531M557.5 519V528M558.5 519V532M559.5 520V528M560.5 521V531M561.5 519V527M562.5 522V527M563.5 517V531M564.5 516V531M565.5 518V531M566.5 518V531M567.5 517V526M568.5 517V527M569.5 521V531M570.5 523V529M571.5 521V531M572.5 519V531M573.5 516V530M574.5 523V615M575.5 522V532M576.5 517V527M577.5 522V530M578.5 518V532M579.5 519V623M580.5 518V525M581.5 517V530M582.5 518V531M583.5 519V532M584.5 519V528M585.5 520V527M586.5 523V526M587.5 517V527M588.5 518V530M589.5 518V529M590.5 521V527M591.5 522V530M592.5 518V532M593.5 521V531M594.5 517V527M595.5 516V529M596.5 516V530M597.5 521V527M598.5 519V528M599.5 523V531M600.5 519V528M601.5 518V527M602.5 522V529M603.5 521V527M604.5 523V525M605.5 521V529M606.5 516V529M607.5 520V528M608.5 521V528M609.5 516V526M610.5 520V530M611.5 518V529M612.5 519V532M613.5 517V527M614.5 519V532M615.5 519V526M616.5 518V525M617.5 522V529M618.5 521V530M619.5 518V527M620.5 518V530M621.5 518V528M622.5 520V526M623.5 520V532M624.5 517V525M625.5 523V527M626.5 518V528M627.5 522V528M628.5 519V530M629.5 520V530M630.5 518V529M631.5 523V530M632.5 522V525M633.5 520V525M634.5 522V528M635.5 520V526M636.5 516V531M637.5 520V603M638.5 521V532M639.5 522V527M640.5 521V531M641.5 519V528M642.5 520V613M643.5 521V531M644.5 518V528M645.5 520V528M646.5 520V527M647.5 519V603M648.5 521V530M649.5 520V528M650.5 517V528M651.5 520V531M652.5 516V530M653.5 520V530M654.5 518V603M655.5 518V532M656.5 518V530M657.5 520V530M658.5 521V530M659.5 519V532M660.5 521V530M661.5 523V528M662.5 518V527M663.5 519V527M664.5 520V532M665.5 522V531M666.5 523V529M667.5 517V531M668.5 520V529M669.5 518V530M670.5 518V529M671.5 491V577M672.5 519V529M673.5 516V526M674.5 518V527M675.5 518V540M676.5 512V529M677.5 519V528M678.5 522V529M679.5 517V544M680.5 510V531M681.5 520V526M682.5 519V538M683.5 519V532M684.5 519V532M685.5 498V569M686.5 522V527M687.5 518V530M688.5 517V546M689.5 521V528M690.5 500V540M691.5 520V530M692.5 522V527M693.5 517V561M694.5 521V526M695.5 511V526M696.5 517V530M697.5 521V543M698.5 518V525M699.5 517V531M700.5 513V538M701.5 518V527M702.5 517V527M703.5 520V527M704.5 520V531M705.5 478V568M706.5 516V527M707.5 480V529M708.5 522V532M709.5 521V536M710.5 520V531M711.5 514V530M712.5 522V527M713.5 518V527M714.5 517V531M715.5 522V526M716.5 505V528M717.5 523V527M718.5 523V528M719.5 521V527M720.5 523V525M721.5 522V545M722.5 521V528M723.5 523V525M724.5 503V527M725.5 522V526M726.5 521V537M727.5 522V527M728.5 514V527M729.5 522V526M730.5 522V526M731.5 522V525M732.5 522V527M733.5 457V551M734.5 520V527M735.5 521V526M736.5 520V528M737.5 512V527M738.5 521V527M739.5 522V526M740.5 521V527M741.5 491V558M742.5 520V528M743.5 522V525M744.5 522V525M745.5 511V538M746.5 522V526M747.5 520V528" stroke="#f4f4ff" stroke-width="1" fill="none"/><path d="M748.5 521V527M749.5 521V526M750.5 522V558M751.5 520V528M752.5 520V528M753.5 487V526M754.5 520V527M755.5 521V526M756.5 520V567M757.5 520V525M758.5 512V525M759.5 523V526M760.5 521V525M761.5 521V528M762.5 522V536M763.5 521V527M764.5 522V526M765.5 510V527M766.5 522V526M767.5 521V526M768.5 521V527M769.5 523V526M770.5 521V544M771.5 523V527M772.5 522V528M773.5 521V525M774.5 494V526M775.5 520V527M776.5 521V525M777.5 523V538M778.5 523V526M779.5 511V526M780.5 521V528M781.5 522V526M782.5 520V526M783.5 521V535M784.5 520V525M785.5 521V526M786.5 520V526M787.5 480V526M788.5 521V528M789.5 522V526M790.5 513V565M791.5 523V526M792.5 522V526M793.5 520V527M794.5 520V527M795.5 521V526M796.5 510V527M797.5 523V527M798.5 522V537M799.5 523V525M800.5 520V526M801.5 522V525M802.5 512V528M803.5 522V527M804.5 521V527M805.5 521V526M806.5 522V539M807.5 523V528M808.5 523V526M809.5 488V528M810.5 521V527M811.5 521V527M812.5 523V528M813.5 509V557M814.5 523V525M815.5 520V526M816.5 523V525M817.5 520V527M818.5 477V546M819.5 523V526M820.5 522V525M821.5 522V527M822.5 522V526M823.5 521V526M824.5 511V559M825.5 521V526M826.5 521V525M827.5 521V526M828.5 522V525M829.5 520V527M830.5 494V527M831.5 520V553M832.5 522V527M833.5 522V527M834.5 520V525M835.5 487V526M836.5 521V528M837.5 521V528M838.5 522V538M839.5 520V527M840.5 523V528M841.5 521V528M842.5 506V527M843.5 520V528M844.5 441V549M845.5 520V528M846.5 521V528M847.5 523V526M848.5 508V525M849.5 521V525M850.5 521V526M851.5 522V540M852.5 522V526M853.5 520V528M854.5 522V526M855.5 506V526M856.5 520V526M857.5 521V526M858.5 523V561M859.5 523V527M860.5 521V531M861.5 482V603M862.5 519V526M863.5 520V529M864.5 472V603M865.5 520V527M866.5 500V527M867.5 519V552M868.5 519V526M869.5 454V603M870.5 522V529M871.5 522V525M872.5 483V560M873.5 519V528M874.5 519V531M875.5 523V526M876.5 490V577M877.5 518V529M878.5 474V609M879.5 521V526M880.5 519V525M881.5 476V600M882.5 522V525M883.5 497V526M884.5 519V566M885.5 521V526M886.5 473V586M887.5 518V528M888.5 520V530M889.5 500V531M890.5 521V570M891.5 519V528M892.5 523V528M893.5 457V585M894.5 520V528M895.5 523V526M896.5 519V604M897.5 517V530M898.5 483V528M899.5 520V575M900.5 503V531M901.5 520V527M902.5 520V527M903.5 502V604M904.5 521V525M905.5 519V562M906.5 522V528M907.5 491V556M908.5 520V527M909.5 521V530M910.5 492V525M911.5 518V528M912.5 467V591M913.5 518V529M914.5 523V529M915.5 449V612M916.5 519V525M917.5 505V527M918.5 522V560M919.5 522V525M920.5 478V528M921.5 518V566M922.5 522V525M923.5 519V528M924.5 496V574M925.5 522V529M926.5 523V531M927.5 517V548M928.5 521V529M929.5 493V563M930.5 523V528M931.5 522V528M932.5 517V564M933.5 522V528M934.5 508V526M935.5 521V527M936.5 522V526M937.5 521V567M938.5 522V525M939.5 523V526M940.5 520V527M941.5 494V578M942.5 522V526M943.5 520V527M944.5 485V582M945.5 521V527M946.5 521V527M947.5 520V528M948.5 522V540M949.5 510V526M950.5 522V527M951.5 522V526M952.5 520V528M953.5 509V528M954.5 522V527M955.5 522V538M956.5 523V528M957.5 520V526M958.5 522V525M959.5 523V527M960.5 520V525M961.5 522V581M962.5 478V528" stroke="#050a07" stroke-width="1" fill="none"/><path d="M521 523.5H748" stroke="#c9dccf" stroke-width="1"/><path d="M748 523.5H963" stroke="#6f8f7d" stroke-width="1"/></svg>
<div class="a" style="left:519px;top:180px;width:1px;height:78px;background:#8c8c8c"></div><div class="a" style="left:519px;top:182px;width:2px;height:11px;background:#4c4c4c"></div>
<svg class="a" style="left:499px;top:698px" width="12" height="60"><path d="M0 0H2V8L3 12 3.6 24 4.6 27 5.4 36 6.4 38 7.2 30H9.8V60H0z" fill="#f4f4ff"/></svg>
<div class="a" style="left:560px;top:281px;width:125px;height:26px;background:#232a27"></div>
<div class="a" style="left:560px;top:281px;width:9px;height:26px;background:#525b56"></div>
<div class="a" style="left:563px;top:289px;width:3px;height:11px;background:repeating-linear-gradient(90deg,#e0e0e0 0 1px,transparent 1px 2px)"></div><div class="a" style="left:563px;top:290px;width:3px;height:11px;background:repeating-linear-gradient(#525b56 0 1px,transparent 1px 2px)"></div>
<svg class="a" style="left:571px;top:285px" width="16" height="15" viewBox="0 0 16 15"><path d="M.5 14v-1.5M2.5 14v-3M4.5 14v-4.5M6.5 14v-6M8.5 14v-7.5M10.5 14v-9M12.5 14v-11M14.5 14V0" stroke="#b8b8b8" stroke-width="1"/></svg>
<svg class="a" style="left:590px;top:283px" width="21" height="21" viewBox="0 0 21 21"><circle cx="10.5" cy="10.5" r="8.4" fill="none" stroke="#b0b0b0" stroke-width="1.5"/><path d="M10.5 2.5v8" stroke="#b0b0b0" stroke-width="1.6"/></svg>
<div class="t" style="left:613.500px;top:286px;font-size:12px;color:#9a9a9a"><span style="color:#2d8ceb;font-weight:bold;font-size:12px;letter-spacing:-.2px">+0</span> dB</div>
<div class="a" style="left:666px;top:284px;width:1px;height:19px;background:#555"></div>
<svg class="a" style="left:671.500px;top:289.700px" width="9" height="9" viewBox="0 0 9 9"><circle cx="7.200" cy="1.800" r="1.650" fill="#d4d4d4"/><path d="M7.200 1.800L4.600 4.400" stroke="#d4d4d4" stroke-width="2.300"/><path d="M1.500 2.700L3.900 3.300 5.700 5.100 6.400 7.400 4.500 5.600 3.400 4.500z" fill="#d4d4d4" stroke="#d4d4d4" stroke-width=".8" stroke-linejoin="round"/><path d="M4.200 4.800L.6 8.400" stroke="#d4d4d4" stroke-width="1.300" stroke-linecap="round"/></svg>
<svg class="a" style="left:800px;top:700px" width="163" height="58" viewBox="0 0 163 58">
<defs><linearGradient id="wg" x1="0" y1="1" x2="1" y2="0"><stop offset="0" stop-color="#c4e636"/><stop offset=".45" stop-color="#4cc24a"/><stop offset="1" stop-color="#2db65e"/></linearGradient>
<linearGradient id="wb" x1="0" y1="1" x2="1" y2="0"><stop offset="0" stop-color="#2f86b8"/><stop offset="1" stop-color="#2aa7c0"/></linearGradient></defs>
<path d="M48 8.5C30 9 8 20 4.5 33C3.5 38.5 7 42 13.5 42C9.5 38 10 31 15 25C22 17 35 11 48 8.5Z" fill="url(#wb)" opacity=".9"/>
<path d="M13.5 42C20 43.5 27 41 28.5 35.5C29.5 31.5 25 29.5 22 32C20.5 33.5 21.5 36 23.5 36C20.5 38 16.5 36 16.5 32C16.500 27.500 23 24.500 29 26.500C24 26 20 29 20.500 32C19 28 24 25 28.500 27C33 29 32.500 36 27.500 39.500C23.500 42 17.500 43 13.500 42Z" fill="#2f8fbc" opacity=".85"/>
<path d="M6 47.5C22 46.500 42 40 45 29C46.200 24 41 21 33 22.500C38.500 24 40 29 36 34C30 41 18 45.500 6 47.500Z" fill="url(#wg)" opacity=".95"/>
<text x="46" y="27" font-family="Liberation Sans,Noto Sans CJK SC,sans-serif" font-weight="bold" font-size="21.200" fill="#2a8ab6" transform="translate(0 2.200) scale(1 .92)">极光下载站</text>
<text x="48" y="47" font-family="Liberation Sans,sans-serif" font-size="16.800" fill="#2bb868" stroke="#2bb868" stroke-width=".35">www.xz7.com</text>
</svg>
<div class="menu" style="left:163px;top:42px;width:356px;height:664px"><div class="mi" style="top:2px;left:2px;width:350px"><span class="l" style="left:32px">编辑源文件(F)</span></div><div class="sep" style="left:30px;top:27px;width:321px"></div><div class="mi" style="top:31px;left:2px;width:350px"><span class="l" style="left:32px">拆分(S)</span><span class="r" style="right:18px">Ctrl+K</span></div><div class="mi" style="top:53px;left:2px;width:350px"><span class="l" style="left:32px">拆分播放指示器下的所有剪辑</span><span class="r" style="right:18px">Ctrl+Alt+Shift+K</span></div><div class="mi" style="top:75px;left:2px;width:350px"><span class="l" style="left:32px">合并剪辑(M)</span></div><div class="mi" style="top:97px;left:2px;width:350px"><span class="l" style="left:32px">变换为唯一拷贝(Q)</span></div><div class="mi" style="top:119px;left:2px;width:350px"><span class="l" style="left:32px">将所选剪辑内的时间选区静音(S)</span></div><div class="mi" style="top:141px;left:2px;width:350px"><span class="l" style="left:32px">匹配剪辑响度(U)...</span></div><div class="mi" style="top:163px;left:2px;width:350px"><span class="l" style="left:32px">自动语音对齐(G)...</span></div><div class="sep" style="left:30px;top:188px;width:321px"></div><div class="mi" style="top:192px;left:2px;width:350px"><span class="l" style="left:32px">剪辑增益(L)</span><span class="r" style="right:18px">Shift+G</span></div><div class="mi" style="top:214px;left:2px;width:350px"><span class="l" style="left:32px">剪辑/组颜色(C)...</span></div><div class="mi" style="top:236px;left:2px;width:350px"><span class="l" style="left:32px">锁定时间(K)</span></div><div class="mi" style="top:258px;left:2px;width:350px"><span class="l" style="left:32px">循环(P)</span></div><div class="mi" style="top:280px;left:2px;width:350px"><span class="l" style="left:32px">静音(M)</span></div><div class="sep" style="left:30px;top:305px;width:321px"></div><div class="mi en" style="top:309px;left:2px;width:350px"><span class="l" style="left:32px">分组</span><svg class="arr" viewBox="0 0 7 10"><path d="M1.2 1.400L5.500 5 1.200 8.600" stroke="#333" stroke-width="1.15" fill="none"/></svg></div><div class="mi en" style="top:331px;left:2px;width:350px"><span class="l" style="left:32px">伸缩</span><svg class="arr" viewBox="0 0 7 10"><path d="M1.2 1.400L5.500 5 1.200 8.600" stroke="#333" stroke-width="1.15" fill="none"/></svg></div><div class="mi en" style="top:353px;left:2px;width:350px"><span class="l" style="left:32px">重新混合</span><svg class="arr" viewBox="0 0 7 10"><path d="M1.2 1.400L5.500 5 1.200 8.600" stroke="#333" stroke-width="1.15" fill="none"/></svg></div><div class="sep" style="left:30px;top:378px;width:321px"></div><div class="mi en hl" style="top:382px;left:2px;width:350px"><span class="l" style="left:32px">淡入(I)</span><svg class="arr" viewBox="0 0 7 10"><path d="M1.2 1.400L5.500 5 1.200 8.600" stroke="#333" stroke-width="1.15" fill="none"/></svg></div><div class="mi en" style="top:404px;left:2px;width:350px"><span class="l" style="left:32px">淡出(O)</span><svg class="arr" viewBox="0 0 7 10"><path d="M1.2 1.400L5.500 5 1.200 8.600" stroke="#333" stroke-width="1.15" fill="none"/></svg></div><div class="mi" style="top:426px;left:2px;width:350px"><span class="l" style="left:32px">启用自动交叉淡化(B)</span></div><div class="sep" style="left:30px;top:451px;width:321px"></div><div class="mi en" style="top:455px;left:2px;width:350px"><span class="l" style="left:32px">修剪(T)</span><svg class="arr" viewBox="0 0 7 10"><path d="M1.2 1.400L5.500 5 1.200 8.600" stroke="#333" stroke-width="1.15" fill="none"/></svg></div><div class="mi" style="top:477px;left:2px;width:350px"><span class="l" style="left:32px">向左微移(E)</span><span class="r" style="right:18px">Alt+,</span></div><div class="mi" style="top:499px;left:2px;width:350px"><span class="l" style="left:32px">向右微移(H)</span><span class="r" style="right:18px">Alt+.</span></div><div class="mi" style="top:521px;left:2px;width:350px"><span class="l" style="left:32px">向上推</span><span class="r" style="right:18px">Alt+向上</span></div><div class="mi" style="top:543px;left:2px;width:350px"><span class="l" style="left:32px">向下推</span><span class="r" style="right:18px">Alt+向下</span></div><div class="mi" style="top:565px;left:2px;width:350px"><span class="l" style="left:32px">将剪辑置于顶层</span></div><div class="mi" style="top:587px;left:2px;width:350px"><span class="l" style="left:32px">将剪辑置于底层</span></div><div class="sep" style="left:30px;top:612px;width:321px"></div><div class="mi" style="top:616px;left:2px;width:350px"><span class="l" style="left:32px">在文件面板中显示剪辑(V)</span></div><div class="mi" style="top:638px;left:2px;width:350px"><span class="l" style="left:32px">链接媒体(D)...</span></div></div>
<div class="menu" style="left:513px;top:422px;width:154px;height:174px"><div class="mi" style="top:2px;left:2px;width:148px"><span class="l" style="left:32px">不淡化(N)</span></div><div class="mi" style="top:24px;left:2px;width:148px"><span class="l" style="left:32px">淡入(F)</span></div><div class="mi" style="top:46px;left:2px;width:148px"><span class="l" style="left:32px">交叉淡化(C)</span></div><div class="sep" style="left:30px;top:71px;width:119px"></div><div class="mi" style="top:75px;left:2px;width:148px"><span class="l" style="left:32px">对称(Y)</span></div><div class="mi" style="top:97px;left:2px;width:148px"><span class="l" style="left:32px">非对称(A)</span></div><div class="sep" style="left:30px;top:122px;width:119px"></div><div class="mi" style="top:126px;left:2px;width:148px"><span class="l" style="left:32px">线性(L)</span></div><div class="mi" style="top:148px;left:2px;width:148px"><span class="l" style="left:32px">余弦(S)</span></div></div>
</body></html>
